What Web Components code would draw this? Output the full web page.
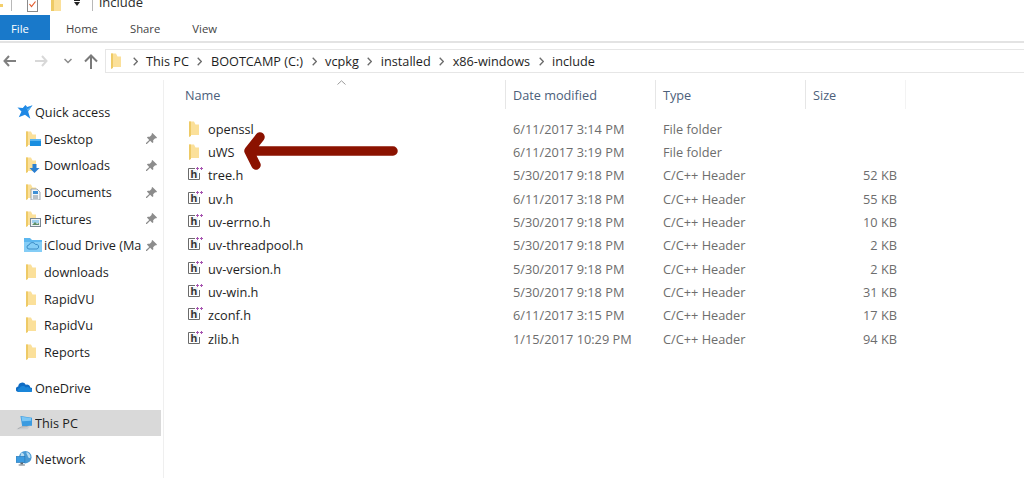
<!DOCTYPE html>
<html><head><meta charset="utf-8"><style>
html,body{margin:0;padding:0;background:#fff;overflow:hidden}
body{width:1024px;height:478px;font:12.7px "Open Sans",sans-serif;color:#1e1e1e}
</style></head><body>
<x-explorer></x-explorer>
<script>
const fbase=`<path d="M1 .5h5l1.500 3h3.500v10.500h-8l-2 1.500z" fill="#fbe09a"/><path d="M1 .5h2v14.500l-2 1z" fill="#eeca66"/>`;
const sbase=fbase;
const icons={
folder:`<svg width="16" height="16" viewBox="0 0 16 16">${fbase}</svg>`,
desktop:`<svg width="16" height="16" viewBox="0 0 16 16">${sbase}<rect x="5" y="8" width="11" height="7" fill="#1a8ee0"/><rect x="5" y="8" width="11" height="2" fill="#5cb6f0"/></svg>`,
downloads:`<svg width="16" height="16" viewBox="0 0 16 16">${sbase}<path d="M7.500 7h4v4h3l-5 5-5-5h3z" fill="#2a7fd0"/></svg>`,
documents:`<svg width="16" height="16" viewBox="0 0 16 16">${sbase}<path d="M6 5h6l3 3v8h-9z" fill="#f3f6f9" stroke="#8a95a0" stroke-width=".8"/><rect x="8" y="7" width="5" height="3" fill="#3f8fd5"/><path d="M8 12h5M8 14h5" stroke="#7f8a94"/></svg>`,
pictures:`<svg width="16" height="16" viewBox="0 0 16 16">${sbase}<rect x="5.500" y="7.500" width="10" height="8" fill="#eef2f5" stroke="#7b8894"/><rect x="7" y="9" width="7" height="3" fill="#9ed0ee"/><path d="M7 14l3-3 2 2 2-1v2z" fill="#5c8f6a"/></svg>`,
icloud:`<svg width="18" height="16" viewBox="0 0 18 16"><path d="M0 1h6l2 2h10v12h-18z" fill="#5cb7ef"/><path d="M0 5h18v10h-18z" fill="#84cdf6"/><path d="M5 12a2 2 0 0 1 0-4 3.500 3.500 0 0 1 6.500-.5 2.300 2.300 0 0 1 1.500 4.500z" fill="none" stroke="#3d8dc7"/></svg>`,
star:`<svg width="16" height="16" viewBox="0 0 18 18"><path d="M17.500 1.500l-5 7 2.500 8-6-4.500-7 3 3-6.500-4.500-4.500 6 .5 3-3.500 2 2.500z" fill="#1e88e5"/><path d="M9.500 2l2.500 4 5-4.500-4.500 7z" fill="#5fb6f2"/></svg>`,
onedrive:`<svg width="16" height="11" viewBox="0 0 18 12"><path d="M3 11a3 3 0 0 1-.5-6 4.500 4.500 0 0 1 8.500-2 3.500 3.500 0 0 1 5 3 2.500 2.500 0 0 1 .5 5z" fill="#0f6cc4"/><path d="M3 11a2.500 2.500 0 0 1 1-4.500 4 4 0 0 1 7-.5 3 3 0 0 1 4.500 1 2.200 2.200 0 0 1 1.500 4z" fill="#1a86d9"/></svg>`,
pc:`<svg width="18" height="16" viewBox="0 0 20 18"><path d="M6 1l13 2v9l-11 1z" fill="#3b9be0"/><path d="M7 2l11 1.500v3L8 7z" fill="#7cc6f4"/><path d="M1 16l6-3 10-1-3 4z" fill="#c8cbce"/><path d="M3 15.500l4-2 7-.6" stroke="#9a9da0" stroke-width=".7" fill="none"/></svg>`,
network:`<svg width="16" height="16" viewBox="0 0 18 18"><circle cx="10.500" cy="7" r="7" fill="#4a9ad4"/><path d="M6 2c3 0 4 3 2.500 5s-3 3-4 1zM12 1c3 1 5 4 4 7-2 0-3-2-3-3s-2-2-1-4z" fill="#b8dcf1"/><rect x="0" y="6" width="10" height="7" fill="#3c9be0" stroke="#2a77b5" stroke-width=".7"/><path d="M3 15h7v1.500h-7z" fill="#8f979e"/><path d="M5 13h3v2h-3z" fill="#5d6870"/></svg>`,
header:`<svg width="16" height="16" viewBox="0 0 16 16"><path d="M7 1.500H.5v11h11V6" fill="none" stroke="#6a6a6a"/><rect x="2" y="3" width="8" height="8" fill="#f2f2f2"/><text x="2.500" y="11" font-family="Liberation Sans" font-size="11" font-weight="700" fill="#333">h</text><path d="M8 1.500h3M9.500 0v3M12 1.500h3M13.500 0v3" stroke="#a654b0"/></svg>`
};
const pin=`<svg width="11" height="11" viewBox="0 0 12 12"><path d="M7 0l5 5-1 1-1-.3-2.200 2.200.2 2.100-1 1-2.500-2.500-3.500 3.500-1-.1 0-.9 3.500-3.500-2.500-2.500 1-1 2.100.2 2.200-2.200-.3-1z" fill="#8c8c8c"/></svg>`;

class XExplorer extends HTMLElement{constructor(){super();const s=this.attachShadow({mode:'open'});s.innerHTML=`<style>
:host{display:flex;flex-direction:column;width:1024px;height:478px;position:relative;overflow:hidden}
.main{display:grid;grid-template-columns:164px 1fr;flex:1;min-height:0}
.arrow{position:absolute;left:240px;top:130px}
</style>
<x-titlebar></x-titlebar><x-ribbon></x-ribbon><x-address></x-address>
<div class="main"><x-nav></x-nav><x-files></x-files></div>
<svg class="arrow" width="165" height="45" viewBox="0 0 165 45"><path d="M153 21H12M20 7L9 21L16 35" fill="none" stroke="#8b1200" stroke-width="9.500" stroke-linecap="round" stroke-linejoin="round"/></svg>`}}

class XTitlebar extends HTMLElement{constructor(){super();const s=this.attachShadow({mode:'open'});s.innerHTML=`<style>
:host{display:flex;align-items:flex-start;height:15px;overflow:hidden;position:relative;font-size:13px;color:#2b2b2b}
.sep{width:1px;height:11px;background:#b8b8b8;flex:none}
.chk{width:11px;height:12px;border:1px solid #8a8a8a;border-top:none;box-sizing:border-box;margin-left:15px;background:#fff;display:block;flex:none}
.f{margin-left:13px;height:11px;width:10px;background:linear-gradient(90deg,#eeca66 0 3px,#fbe09a 3px);flex:none}
.d{margin-left:13px;width:6px;height:6px;flex:none;display:block}
.t{margin-left:6px;line-height:15px;height:15px;margin-top:-5px}
.y{width:3px;height:3px;background:#f4cf6b;margin-top:4px;flex:none}
</style>
<span class="y"></span><span class="sep" style="margin-left:8px"></span>
<span class="chk"><svg width="9" height="10" viewBox="0 0 9 10" style="display:block"><path d="M1.500 4l2 2.500 4-5" fill="none" stroke="#e2592a" stroke-width="1.200"/></svg></span>
<span class="f"></span><svg class="d" viewBox="0 0 6 6"><path d="M0 0h6v1H0zM0 2h6L3 6z" fill="#222"/></svg><span class="sep" style="margin-left:12px"></span><span class="t">include</span>`}}

class XTab extends HTMLElement{constructor(){super();const s=this.attachShadow({mode:'open'});s.innerHTML=`<style>
:host{display:flex;align-items:center;justify-content:center;height:25px;font-size:11.300px;color:#444;padding:2px 16px 0;box-sizing:border-box}
:host([active]){background:#1979ca;color:#fff;width:50px;padding:1px 0 0 11px;justify-content:flex-start}
</style><slot></slot>`}}

class XRibbon extends HTMLElement{constructor(){super();const s=this.attachShadow({mode:'open'});s.innerHTML=`<style>
:host{display:flex;border-bottom:2px solid #e3e3e3;height:26px;box-sizing:content-box}
</style><x-tab active>File</x-tab><x-tab>Home</x-tab><x-tab>Share</x-tab><x-tab>View</x-tab>`}}

class XAddress extends HTMLElement{constructor(){super();const s=this.attachShadow({mode:'open'});s.innerHTML=`<style>
:host{display:flex;align-items:flex-start;height:37px;padding-top:6px;box-sizing:border-box}
.nav{width:105px;display:flex;flex:none;position:relative;height:24px}
.nav svg{position:absolute}
.box{flex:1;height:24px;border:1px solid #e6e6e6;border-right:0;display:flex;align-items:center;font-size:12.700px;color:#1e1e1e;padding-left:4px;box-sizing:border-box}
.c{margin:0 8.500px;flex:none}
.f{flex:none;display:block;width:14px;overflow:hidden;line-height:0}
</style>
<div class="nav">
<svg style="left:3px;top:6px" width="13" height="12" viewBox="0 0 13 12"><path d="M6 1L1.500 6 6 11M2 6h11" fill="none" stroke="#808080" stroke-width="2"/></svg>
<svg style="left:35px;top:6px" width="13" height="12" viewBox="0 0 13 12"><path d="M7 1l4.500 5L7 11M11 6H0" fill="none" stroke="#d8d8d8" stroke-width="2"/></svg>
<svg style="left:64px;top:9px" width="8" height="6" viewBox="0 0 8 6"><path d="M.5 1L4 4.500 7.500 1" fill="none" stroke="#8a8a8a" stroke-width="1.500"/></svg>
<svg style="left:84px;top:5px" width="14" height="15" viewBox="0 0 14 15"><path d="M1 7.500L7 1.500l6 6M7 2v13" fill="none" stroke="#7a7a7a" stroke-width="2"/></svg>
</div>
<div class="box"><span class="f">${icons.folder}</span>
${['This PC','BOOTCAMP (C:)','vcpkg','installed','x86-windows','include'].map(t=>`<svg class="c" width="5" height="9" viewBox="0 0 5 9"><path d="M.7 .7L4.300 4.500.7 8.300" fill="none" stroke="#6b6b6b" stroke-width="1.300"/></svg><span>${t}</span>`).join('')}
</div>`}}

class XNavItem extends HTMLElement{connectedCallback(){const a=n=>this.getAttribute(n);const s=this.attachShadow({mode:'open'});s.innerHTML=`<style>
:host{display:flex;align-items:center;height:26.670px;font-size:12.700px;color:#1e1e1e;box-sizing:border-box;padding-left:${a('indent')||25}px;position:relative;white-space:nowrap;overflow:hidden}
:host([sel]){background:#d9d9d9;margin-right:2px}
.i{width:${a('w')||19}px;flex:none;display:flex;align-items:center}
.i svg{display:block}
.t{flex:1;overflow:hidden}
.p{position:absolute;right:6px;top:8px;line-height:0}
</style><span class="i">${icons[a('icon')]}</span><span class="t"><slot></slot></span>${this.hasAttribute('pin')?`<span class="p">${pin}</span>`:''}`}}
class XNav extends HTMLElement{constructor(){super();const s=this.attachShadow({mode:'open'});s.innerHTML=`<style>
:host{display:flex;flex-direction:column;border-right:1px solid #efefef;padding-top:18.600px;box-sizing:border-box;height:100%}
.g{height:9.300px}.g2{height:8.400px}.g3{height:10px}
x-nav-item{padding-right:16px}
</style>
<x-nav-item icon="star" indent="17" w="18">Quick access</x-nav-item>
<x-nav-item icon="desktop" pin>Desktop</x-nav-item>
<x-nav-item icon="downloads" pin>Downloads</x-nav-item>
<x-nav-item icon="documents" pin>Documents</x-nav-item>
<x-nav-item icon="pictures" pin>Pictures</x-nav-item>
<x-nav-item icon="icloud" pin indent="24" w="20">iCloud Drive (Ma</x-nav-item>
<x-nav-item icon="folder">downloads</x-nav-item>
<x-nav-item icon="folder">RapidVU</x-nav-item>
<x-nav-item icon="folder">RapidVu</x-nav-item>
<x-nav-item icon="folder">Reports</x-nav-item>
<div class="g"></div>
<x-nav-item icon="onedrive" indent="16" w="19">OneDrive</x-nav-item>
<div class="g2"></div>
<x-nav-item icon="pc" sel indent="15" w="20">This PC</x-nav-item>
<div class="g3"></div>
<x-nav-item icon="network" indent="16" w="19">Network</x-nav-item>`}}

class XFileRow extends HTMLElement{connectedCallback(){const a=n=>this.getAttribute(n);const s=this.attachShadow({mode:'open'});s.innerHTML=`<style>
:host{display:grid;grid-template-columns:44px 305px 150px 144px 90px;height:23.300px;align-items:center;font-size:12.750px;color:#6d6d6d;white-space:nowrap}
.i{padding-left:24px;line-height:0}
.n{color:#1e1e1e}
.s{text-align:right}
</style><span class="i">${icons[a('icon')]}</span><span class="n">${a('name')}</span><span>${a('date')}</span><span>${a('type')}</span><span class="s">${a('size')||''}</span>`}}

class XFiles extends HTMLElement{constructor(){super();const s=this.attachShadow({mode:'open'});
const rows=[['openssl','6/11/2017 3:14 PM','File folder','','folder'],['uWS','6/11/2017 3:19 PM','File folder','','folder'],['tree.h','5/30/2017 9:18 PM','C/C++ Header','52 KB'],['uv.h','6/11/2017 3:18 PM','C/C++ Header','55 KB'],['uv-errno.h','5/30/2017 9:18 PM','C/C++ Header','10 KB'],['uv-threadpool.h','5/30/2017 9:18 PM','C/C++ Header','2 KB'],['uv-version.h','5/30/2017 9:18 PM','C/C++ Header','2 KB'],['uv-win.h','5/30/2017 9:18 PM','C/C++ Header','31 KB'],['zconf.h','6/11/2017 3:15 PM','C/C++ Header','17 KB'],['zlib.h','1/15/2017 10:29 PM','C/C++ Header','94 KB']];
s.innerHTML=`<style>
:host{display:block;position:relative}
.h{display:grid;grid-template-columns:342px 150px 150px 100px;height:29px;font-size:12.700px;color:#4c607a}
.h span{display:flex;align-items:center;padding-left:7px;border-right:1px solid #e6e6e6;box-sizing:border-box;height:29px}
.h span:first-child{padding-left:21px}
.h span:last-child{border-right-color:#f3f3f3;padding-left:7px}
.caret{position:absolute;left:173px;top:0}
.rows{margin-top:8.200px}
</style>
<svg class="caret" width="9" height="5" viewBox="0 0 9 5"><path d="M.5 4.500L4.500 .8l4 3.700" fill="none" stroke="#9a9a9a"/></svg>
<div class="h"><span>Name</span><span>Date modified</span><span>Type</span><span>Size</span></div>
<div class="rows">${rows.map(r=>`<x-file-row name="${r[0]}" date="${r[1]}" type="${r[2]}" size="${r[3]}" icon="${r[4]||'header'}"></x-file-row>`).join('')}</div>`}}

customElements.define('x-titlebar',XTitlebar);customElements.define('x-tab',XTab);customElements.define('x-ribbon',XRibbon);customElements.define('x-address',XAddress);customElements.define('x-nav-item',XNavItem);customElements.define('x-nav',XNav);customElements.define('x-file-row',XFileRow);customElements.define('x-files',XFiles);customElements.define('x-explorer',XExplorer);
</script></body></html>
